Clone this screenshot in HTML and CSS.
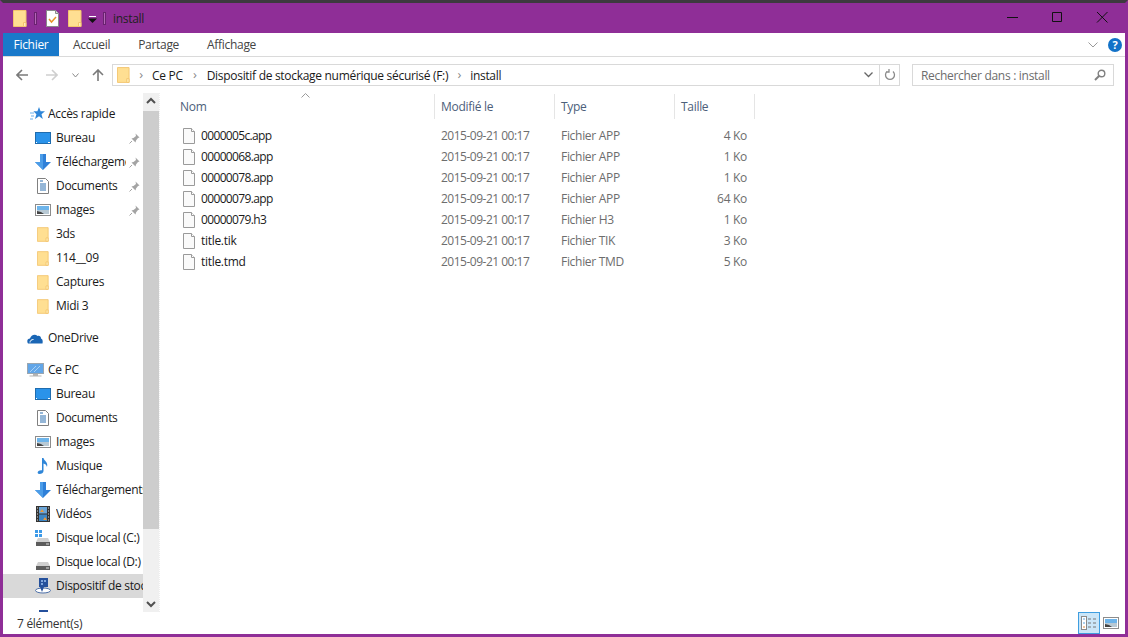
FILE: index.html
```html
<!DOCTYPE html>
<html lang="fr">
<head>
  <meta charset="UTF-8" />
  <title>install</title>
  <link rel="stylesheet" href="styles.css">
</head>
<body>
  <svg class="sprites" xmlns="http://www.w3.org/2000/svg">
    <symbol id="i-folder" viewBox="0 0 14 17">
      <path d="M.5.5h12.5v16H.5z" fill="#ffdf92" stroke="#f3c56e"/>
      <path d="M10.5 12.5H13v4h-2.500z" fill="#ffeebb" stroke="#f3c56e"/>
    </symbol>
    <symbol id="i-note" viewBox="0 0 13 17">
      <path d="M.5.5h9l3 3v13H.5z" fill="#fff" stroke="#8a8a8a"/>
      <path d="M9.500.5v3h3" fill="#ddd" stroke="#8a8a8a"/>
      <path d="M3 9l2.500 3L10 7" fill="none" stroke="#e8942c" stroke-width="1.500"/>
    </symbol>
    <symbol id="i-desktop" viewBox="0 0 16 12">
      <rect x=".5" y=".5" width="15" height="11" fill="#2a93ea" stroke="#1f6cae"/>
      <path d="M1 10.500h1M13 10.500h2" stroke="#fff"/>
    </symbol>
    <symbol id="i-down" viewBox="0 0 16 16">
      <path d="M5 0h6v8h5l-8 8-8-8h5z" fill="#2f80d8"/>
      <path d="M5 0h3v16l-8-8h5z" fill="#4c9de8"/>
    </symbol>
    <symbol id="i-doc" viewBox="0 0 12 16">
      <path d="M.5.500h8l3 3v12H.5z" fill="#fff" stroke="#808080"/>
      <path d="M3 3h3M3 6h6M3 8h6M3 10h6M3 12h6" stroke="#2a6fb0"/>
    </symbol>
    <symbol id="i-img" viewBox="0 0 16 12">
      <rect x=".5" y=".5" width="15" height="11" fill="#fff" stroke="#8c8c8c"/>
      <rect x="2" y="2" width="12" height="4" fill="#6db4ea"/>
      <rect x="2" y="6" width="12" height="4" fill="#b8c9d4"/>
      <path d="M2 10V7l4 1 3 2z" fill="#444"/>
    </symbol>
    <symbol id="i-pin" viewBox="0 0 11 11">
      <path d="M6.500.5l4 4-1.500.5-2 2.500-.5 2-4-4 2-.5L7 3z" fill="#a4a4a4"/>
      <path d="M3 8L.5 10.500" stroke="#a4a4a4"/>
    </symbol>
    <symbol id="i-star" viewBox="0 0 15 14">
      <path d="M9 0l1.600 4.300H15l-3.500 3 1.300 4.700L9 9.300 5 12l1.400-4.700-3-3h4z" fill="#2f86d8"/>
      <path d="M0 6h4M1 9h3M0 12h3" stroke="#6db0ea"/>
    </symbol>
    <symbol id="i-cloud" viewBox="0 0 16 11">
      <path d="M1 10.500C-.5 8 .5 5.500 3 5.500 4 2 8 .5 10.500 3c2-.5 3.500.5 3.500 2.500 1.500.5 2 2 1.500 5z" fill="#1a66b5"/>
      <path d="M3 9.500c0-2 1.500-3 3.500-3" stroke="#fff" fill="none"/>
    </symbol>
    <symbol id="i-pc" viewBox="0 0 17 14">
      <rect x=".5" y=".5" width="16" height="10" fill="#62a6e8" stroke="#9aa6b0"/>
      <path d="M3 9l6-6M7 9l6-6" stroke="#a8d0f4"/>
      <path d="M6 11h5v1.500H6zM2.500 12.500h12v1h-12z" fill="#b4b4b4"/>
    </symbol>
    <symbol id="i-music" viewBox="0 0 12 16">
      <path d="M5 0h1.500c.5 3 5 4 3.500 9-.3-2-2-3.200-3.500-3.500V13c0 2-2 3-4 3s-2.500-2-1-3c1-.8 2.500-1 3.500-.7z" fill="#2f86d8"/>
    </symbol>
    <symbol id="i-film" viewBox="0 0 14 16">
      <rect width="14" height="16" fill="#333"/>
      <rect x="3" y="1" width="8" height="6.500" fill="#6aa5d8"/>
      <rect x="3" y="8.500" width="8" height="6.500" fill="#3d86c4"/>
      <path d="M4 6l2-3 2 3zM7 14l2-3 2 3z" fill="#e89a3c"/>
      <path d="M1 2h1M1 5h1M1 8h1M1 11h1M1 14h1M12 2h1M12 5h1M12 8h1M12 11h1M12 14h1" stroke="#ddd"/>
    </symbol>
    <symbol id="i-disk" viewBox="0 0 14 8">
      <path d="M2 0h10l2 4H0z" fill="#cfcfcf"/>
      <rect y="4" width="14" height="4" fill="#5c5c5c"/>
      <path d="M10 6h3" stroke="#ddd"/>
    </symbol>
    <symbol id="i-win" viewBox="0 0 7 7">
      <path d="M0 0h3v3H0zM4 0h3v3H4zM0 4h3v3H0zM4 4h3v3H4z" fill="#3c9ae8"/>
    </symbol>
    <symbol id="i-usb" viewBox="0 0 16 16">
      <path d="M4 0h9v9H4z" fill="#24509c"/>
      <path d="M6 2h2v2H6zM9 2h2v2H9zM6 5h2v2H6z" fill="#7fa6de"/>
      <ellipse cx="8" cy="12.500" rx="7.500" ry="2.500" fill="#fff" stroke="#4a6ea8"/>
      <path d="M5 9h4l-2 5z" fill="#24509c"/>
    </symbol>
    <symbol id="i-file" viewBox="0 0 12 16">
      <path d="M.5.5h8l3 3v12H.5z" fill="#fafafa" stroke="#9a9a9a"/>
      <path d="M8.500.5v3h3" fill="#fff" stroke="#9a9a9a"/>
    </symbol>
  </svg>

  <div class="window">
    <header class="titlebar">
      <svg class="qa qa-folder"><use href="#i-folder"/></svg>
      <span class="qa-sep"></span>
      <svg class="qa qa-note"><use href="#i-note"/></svg>
      <svg class="qa qa-folder qa-second"><use href="#i-folder"/></svg>
      <svg class="qa-drop" viewBox="0 0 9 8"><path d="M1 .5h7" stroke="#fff"/><path d="M0 2.500h9L4.500 7z" fill="#111"/></svg>
      <span class="qa-sep qa-sep2"></span>
      <span class="title-text">install</span>
      <div class="win-btns">
        <svg class="win-btn" viewBox="0 0 45 30"><path d="M17 14.500h11" stroke="#111"/></svg>
        <svg class="win-btn" viewBox="0 0 45 30"><path d="M17.500 9.500h9v9h-9z" fill="none" stroke="#111"/></svg>
        <svg class="win-btn" viewBox="0 0 45 30"><path d="M17 9l10.500 10.500M27.500 9L17 19.500" stroke="#111"/></svg>
      </div>
    </header>

    <nav class="ribbon">
      <span class="tab tab-file">Fichier</span>
      <span class="tab">Accueil</span>
      <span class="tab">Partage</span>
      <span class="tab">Affichage</span>
      <svg class="ribbon-chev" viewBox="0 0 10 6"><path d="M.5.500L5 5 9.500.5" fill="none" stroke="#999"/></svg>
      <span class="help">?</span>
    </nav>

    <div class="addressrow">
      <svg class="nav-arrow" viewBox="0 0 12 12"><path d="M12 6H1.500M6 1L1 6l5 5" fill="none" stroke="#7a7a7a" stroke-width="1.600"/></svg>
      <svg class="nav-arrow nav-off" viewBox="0 0 12 12"><path d="M0 6h10.500M6 1l5 5-5 5" fill="none" stroke="#cfcfcf" stroke-width="1.600"/></svg>
      <svg class="nav-small" viewBox="0 0 7 5"><path d="M.5.500L3.500 4l3-3.500" fill="none" stroke="#8a8a8a"/></svg>
      <svg class="nav-arrow nav-up" viewBox="0 0 12 12"><path d="M6 12V1.500M1 6l5-5 5 5" fill="none" stroke="#7a7a7a" stroke-width="1.600"/></svg>
      <div class="addressbox">
        <svg class="addr-folder"><use href="#i-folder"/></svg>
        <span class="crumb-sep first">›</span>
        <span class="crumb">Ce PC</span>
        <span class="crumb-sep">›</span>
        <span class="crumb">Dispositif de stockage numérique sécurisé (F:)</span>
        <span class="crumb-sep last">›</span>
        <span class="crumb">install</span>
        <svg class="addr-drop" viewBox="0 0 9 6"><path d="M.5.500l4 4 4-4" fill="none" stroke="#666" stroke-width="1.300"/></svg>
        <span class="addr-refresh">
          <svg viewBox="0 0 12 12"><path d="M3 2.500a4.500 4.500 0 1 0 6 0M5 0v3H2" fill="none" stroke="#8a8a8a" stroke-width="1.300"/></svg>
        </span>
      </div>
      <div class="searchbox">
        <span>Rechercher dans : install</span>
        <svg viewBox="0 0 12 12"><circle cx="7.500" cy="4.500" r="3.300" fill="none" stroke="#808080" stroke-width="1.400"/><path d="M5 7l-4 4" stroke="#808080" stroke-width="2"/></svg>
      </div>
    </div>

    <div class="body">
      <aside class="sidebar">
        <ul class="tree">
          <li class="head first-head"><svg class="ic-star"><use href="#i-star"/></svg><span>Accès rapide</span></li>
          <li class="sub pinned"><svg class="ic-wide"><use href="#i-desktop"/></svg><span>Bureau</span><svg class="pin"><use href="#i-pin"/></svg></li>
          <li class="sub pinned"><svg class="ic-down"><use href="#i-down"/></svg><span>Téléchargements</span><svg class="pin"><use href="#i-pin"/></svg></li>
          <li class="sub pinned"><svg class="ic-doc"><use href="#i-doc"/></svg><span>Documents</span><svg class="pin"><use href="#i-pin"/></svg></li>
          <li class="sub pinned"><svg class="ic-wide"><use href="#i-img"/></svg><span>Images</span><svg class="pin"><use href="#i-pin"/></svg></li>
          <li class="sub"><svg class="ic-folder"><use href="#i-folder"/></svg><span>3ds</span></li>
          <li class="sub"><svg class="ic-folder"><use href="#i-folder"/></svg><span>114__09</span></li>
          <li class="sub"><svg class="ic-folder"><use href="#i-folder"/></svg><span>Captures</span></li>
          <li class="sub"><svg class="ic-folder"><use href="#i-folder"/></svg><span>Midi 3</span></li>
          <li class="head group"><svg class="ic-cloud"><use href="#i-cloud"/></svg><span>OneDrive</span></li>
          <li class="head group"><svg class="ic-pc"><use href="#i-pc"/></svg><span>Ce PC</span></li>
          <li class="sub"><svg class="ic-wide"><use href="#i-desktop"/></svg><span>Bureau</span></li>
          <li class="sub"><svg class="ic-doc"><use href="#i-doc"/></svg><span>Documents</span></li>
          <li class="sub"><svg class="ic-wide"><use href="#i-img"/></svg><span>Images</span></li>
          <li class="sub"><svg class="ic-music"><use href="#i-music"/></svg><span>Musique</span></li>
          <li class="sub"><svg class="ic-down"><use href="#i-down"/></svg><span>Téléchargements</span></li>
          <li class="sub"><svg class="ic-film"><use href="#i-film"/></svg><span>Vidéos</span></li>
          <li class="sub"><span class="ic-drive"><svg class="drive-win"><use href="#i-win"/></svg><svg class="drive-body"><use href="#i-disk"/></svg></span><span>Disque local (C:)</span></li>
          <li class="sub"><span class="ic-drive"><svg class="drive-body"><use href="#i-disk"/></svg></span><span>Disque local (D:)</span></li>
          <li class="sub selected"><svg class="ic-usb"><use href="#i-usb"/></svg><span>Dispositif de stockage</span></li>
          <li class="sub group"><svg class="ic-usb"><use href="#i-usb"/></svg></li>
        </ul>
        <div class="scrollbar">
          <svg class="sb-arrow" viewBox="0 0 16 16"><path d="M4 10l4-4 4 4" fill="none" stroke="#505050" stroke-width="2"/></svg>
          <div class="sb-thumb"></div>
          <svg class="sb-arrow sb-bottom" viewBox="0 0 16 16"><path d="M4 6l4 4 4-4" fill="none" stroke="#505050" stroke-width="2"/></svg>
        </div>
      </aside>

      <main class="files">
        <svg class="sort-caret" viewBox="0 0 9 5"><path d="M.5 4.500l4-4 4 4" fill="none" stroke="#9a9a9a"/></svg>
        <div class="row headrow">
          <span class="col-name">Nom</span>
          <span>Modifié le</span>
          <span>Type</span>
          <span>Taille</span>
        </div>
        <div class="row"><span class="col-name"><svg class="ic-file"><use href="#i-file"/></svg><b class="digits">0000005c.app</b></span><span class="col-date">2015-09-21 00:17</span><span>Fichier APP</span><span class="col-size">4 Ko</span></div>
        <div class="row"><span class="col-name"><svg class="ic-file"><use href="#i-file"/></svg><b class="digits">00000068.app</b></span><span class="col-date">2015-09-21 00:17</span><span>Fichier APP</span><span class="col-size">1 Ko</span></div>
        <div class="row"><span class="col-name"><svg class="ic-file"><use href="#i-file"/></svg><b class="digits">00000078.app</b></span><span class="col-date">2015-09-21 00:17</span><span>Fichier APP</span><span class="col-size">1 Ko</span></div>
        <div class="row"><span class="col-name"><svg class="ic-file"><use href="#i-file"/></svg><b class="digits">00000079.app</b></span><span class="col-date">2015-09-21 00:17</span><span>Fichier APP</span><span class="col-size">64 Ko</span></div>
        <div class="row"><span class="col-name"><svg class="ic-file"><use href="#i-file"/></svg><b class="digits">00000079.h3</b></span><span class="col-date">2015-09-21 00:17</span><span>Fichier H3</span><span class="col-size">1 Ko</span></div>
        <div class="row"><span class="col-name"><svg class="ic-file"><use href="#i-file"/></svg><b>title.tik</b></span><span class="col-date">2015-09-21 00:17</span><span>Fichier TIK</span><span class="col-size">3 Ko</span></div>
        <div class="row"><span class="col-name"><svg class="ic-file"><use href="#i-file"/></svg><b>title.tmd</b></span><span class="col-date">2015-09-21 00:17</span><span>Fichier TMD</span><span class="col-size">5 Ko</span></div>
      </main>
    </div>

    <footer class="statusbar">
      <span>7 élément(s)</span>
      <span class="view-btn active">
        <svg viewBox="0 0 16 14"><rect x=".5" y=".5" width="5" height="13" fill="#fff" stroke="#8a8a8a"/><path d="M2 3h2" stroke="#5aa5e0"/><path d="M2 7h2" stroke="#5aa5e0"/><path d="M2 11h2" stroke="#e08a3c"/><path d="M7 3h3M12 3h3M7 7h3M12 7h3M7 11h3M12 11h3" stroke="#777"/></svg>
      </span>
      <span class="view-btn">
        <svg><use href="#i-img"/></svg>
      </span>
    </footer>
  </div>
</body>
</html>
```

FILE: styles.css
```css
* { box-sizing: border-box; }
html, body { margin: 0; padding: 0; height: 100%; }
body {
  font-family: "Open Sans", "Noto Sans", sans-serif;
  font-size: 12px;
  letter-spacing: -0.3px;
  color: #1a1a1a;
  background: #8f2e97;
  overflow: hidden;
}
svg { display: block; flex: none; }
.sprites { display: none; }

.window {
  height: 637px;
  display: flex;
  flex-direction: column;
  border-top: 3px solid #3d3a3e;
  border-left: 3px solid #8f2e97;
  border-right: 3px solid #8f2e97;
  border-bottom: 3px solid #8f2e97;
  background: #fff;
}

/* title bar */
.titlebar {
  height: 30px;
  flex: none;
  display: flex;
  align-items: center;
  background: #8f2e97;
  margin-left: -3px;
  margin-right: -3px;
  padding-left: 13px;
}
.qa { width: 14px; height: 17px; }
.qa-note { width: 13px; margin-left: 9px; }
.qa-second { margin-left: 9px; }
.qa-sep { width: 3px; height: 13px; margin-left: 7px; background: #b566b8; border: 1px solid #6a2270; }
.qa-sep2 { margin-left: 6px; }
.qa-drop { width: 9px; height: 8px; margin-left: 6px; margin-top: 3px; }
.title-text { margin-left: 7px; color: #222; font-size: 12px; }
.win-btns { margin-left: auto; margin-right: 3px; display: flex; }
.win-btn { width: 45px; height: 30px; }

/* ribbon */
.ribbon {
  height: 24px;
  flex: none;
  display: flex;
  align-items: center;
  border-bottom: 1px solid #dadada;
}
.tab { padding: 0 14px; color: #444; height: 23px; line-height: 24px; }
.tab-file { width: 56px; padding: 0; text-align: center; background: #1979ca; color: #fff; }
.ribbon-chev { width: 10px; height: 6px; margin-left: auto; margin-right: 10px; }
.help {
  width: 14px;
  height: 14px;
  border-radius: 50%;
  background: #1272c8;
  color: #fff;
  font-weight: 700;
  font-size: 11px;
  line-height: 14px;
  text-align: center;
  margin-right: 3px;
}

/* address row */
.addressrow {
  height: 36px;
  flex: none;
  display: flex;
  align-items: center;
  padding-left: 13px;
  padding-right: 11px;
}
.nav-arrow { width: 12px; height: 12px; }
.nav-off { margin-left: 18px; }
.nav-small { width: 7px; height: 5px; margin-left: 14px; }
.nav-up { margin-left: 13px; }
.addressbox {
  width: 788px;
  height: 22px;
  margin-left: 8px;
  border: 1px solid #d9d9d9;
  display: flex;
  align-items: center;
  padding-left: 4px;
}
.addr-folder { width: 13px; height: 16px; }
.crumb { color: #1a1a1a; }
.crumb-sep { color: #8a8a8a; width: 24px; text-align: center; font-size: 13px; margin-top: -2px; }
.crumb-sep.first { width: 22px; }
.crumb-sep.last { width: 22px; }
.addr-drop { width: 9px; height: 6px; margin-left: auto; margin-right: 6px; }
.addr-refresh {
  width: 20px;
  height: 20px;
  border-left: 1px solid #d9d9d9;
  display: flex;
  align-items: center;
  justify-content: center;
}
.addr-refresh svg { width: 12px; height: 12px; }
.searchbox {
  width: 202px;
  height: 22px;
  margin-left: 12px;
  border: 1px solid #d9d9d9;
  display: flex;
  align-items: center;
  justify-content: space-between;
  padding: 0 7px 0 8px;
  color: #6d6d6d;
}
.searchbox svg { width: 12px; height: 12px; }

/* main area */
.body { flex: 1; min-height: 0; display: flex; }
.sidebar { width: 157px; flex: none; display: flex; border-right: 1px dotted #eee; }
.tree {
  list-style: none;
  margin: 0;
  padding: 9px 0 0;
  width: 140px;
  flex: none;
  overflow: hidden;
}
.tree li { height: 24px; display: flex; align-items: center; white-space: nowrap; position: relative; overflow: hidden; }
.tree li > span:not(.ic-drive) { overflow: hidden; flex: 1; padding-bottom: 2px; }
.tree li.group { margin-top: 8px; }
.head { padding-left: 45px; }
.head svg { margin-left: -21px; margin-right: 6px; }
.head .ic-star { margin-left: -18px; margin-right: 3px; }
.head .ic-cloud { margin-right: 5px; }
.head .ic-pc { margin-right: 4px; }
.sub { padding-left: 53px; }
.sub > svg, .sub > .ic-drive { margin-left: -21px; margin-right: 5px; }
.selected { background: #d9d9d9; }

.ic-star { width: 15px; height: 14px; }
.ic-cloud { width: 16px; height: 11px; }
.ic-pc { width: 17px; height: 14px; }
.ic-wide { width: 16px; height: 12px; }
.ic-down { width: 16px; height: 16px; }
.ic-doc { width: 12px; height: 16px; padding: 0; }
.sub > .ic-doc { margin-left: -19px; margin-right: 7px; }
.sub > .ic-folder { width: 12px; height: 15px; margin-left: -19px; margin-right: 7px; }
.sub > .ic-music { width: 12px; height: 16px; margin-left: -19px; margin-right: 7px; }
.sub > .ic-film { width: 14px; height: 16px; margin-left: -20px; margin-right: 6px; }
.ic-usb { width: 16px; height: 16px; }
.ic-drive { width: 16px; height: 16px; display: block; position: relative; flex: none; }
.drive-body { position: absolute; left: 1px; bottom: 0; width: 14px; height: 8px; }
.drive-win { position: absolute; left: 0; top: 0; width: 7px; height: 7px; }
.sub > .pin { width: 11px; height: 11px; margin: 0; position: absolute; right: 3px; top: 7px; }
.pinned > span { max-width: 70px; }

.scrollbar {
  width: 16px;
  flex: none;
  background: #f0f0f0;
  display: flex;
  flex-direction: column;
}
.sb-arrow { width: 16px; height: 16px; }
.sb-thumb { height: 418px; margin-top: 2px; background: #cdcdcd; }
.sb-bottom { margin-top: auto; }

/* file list */
.files { flex: 1; min-width: 0; position: relative; color: #6d6d6d; }
.row {
  display: grid;
  grid-template-columns: 275px 120px 120px 80px;
  height: 21px;
  padding-bottom: 2px;
  align-items: center;
}
.row > span { padding-left: 6px; }
.row .col-name { display: flex; align-items: center; padding-left: 23px; }
.row .col-name b { font-weight: 400; color: #1a1a1a; margin-left: 6px; }
.row .col-name b.digits { letter-spacing: -0.65px; }
.row .col-date { letter-spacing: -0.5px; }
.row .col-size { text-align: right; padding-right: 8px; }
.ic-file { width: 12px; height: 16px; }
.headrow { height: 30px; margin-bottom: 3px; padding-bottom: 5px; color: #4c607a; align-items: stretch; }
.headrow > span { border-right: 1px solid #e5e5e5; display: flex; align-items: center; height: 25px; margin-top: 1px; }
.row.headrow .col-name { padding-left: 20px; }
.sort-caret { position: absolute; left: 141px; top: 0; width: 9px; height: 5px; }

/* status bar */
.statusbar {
  height: 22px;
  flex: none;
  display: flex;
  align-items: center;
  padding-left: 14px;
  padding-right: 3px;
  color: #333;
}
.view-btn { width: 22px; height: 22px; display: flex; align-items: center; justify-content: center; }
.view-btn.active { margin-left: auto; background: #cbe6f8; border: 1px solid #3f9ee0; }
.view-btn svg { width: 16px; height: 14px; }
.view-btn:last-child svg { height: 12px; }
```
